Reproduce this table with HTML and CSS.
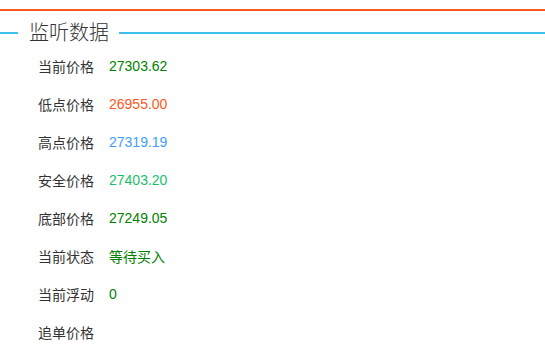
FILE: index.html
```html
<!DOCTYPE html>
<html lang="zh">
<head>
<meta charset="utf-8">
<link rel="stylesheet" href="styles.css">
</head>
<body>
<div class="top-rule"></div>
<div class="field-title">
  <span class="line line-left"></span>
  <span class="title">监听数据</span>
  <span class="line line-right"></span>
</div>
<div class="rows">
  <div class="row"><span class="label">当前价格</span><span class="value green">27303.62</span></div>
  <div class="row"><span class="label">低点价格</span><span class="value red">26955.00</span></div>
  <div class="row"><span class="label">高点价格</span><span class="value blue">27319.19</span></div>
  <div class="row"><span class="label">安全价格</span><span class="value teal">27403.20</span></div>
  <div class="row"><span class="label">底部价格</span><span class="value green">27249.05</span></div>
  <div class="row"><span class="label">当前状态</span><span class="value green">等待买入</span></div>
  <div class="row"><span class="label">当前浮动</span><span class="value green">0</span></div>
  <div class="row"><span class="label">追单价格</span><span class="value green"></span></div>
</div>
</body>
</html>
```
FILE: styles.css
```css
html, body {
  margin: 0;
  padding: 0;
  background: #fff;
}
body {
  font-family: "Liberation Sans", "Noto Sans CJK SC", sans-serif;
  color: #333;
  padding-top: 9px;
}
.top-rule {
  height: 2px;
  background: #ff5722;
}
.field-title {
  display: flex;
  align-items: center;
  margin-top: 10px;
  height: 24px;
}
.line {
  height: 2px;
  background: #41bfec;
}
.line-left {
  width: 18px;
}
.line-right {
  flex: 1;
}
.title {
  padding: 0 10px 0 11px;
  font-size: 20px;
  font-weight: 300;
  line-height: 24px;
  color: #333;
}
.rows {
  display: flex;
  flex-direction: column;
  padding-left: 38px;
  margin-top: 2px;
}
.row {
  display: flex;
  align-items: center;
  height: 38px;
  font-size: 14px;
}
.label {
  width: 71px;
  color: #333;
}
.green { color: #008000; }
.red { color: #ff5722; }
.blue { color: #409eff; }
.teal { color: #19be6b; }
```
